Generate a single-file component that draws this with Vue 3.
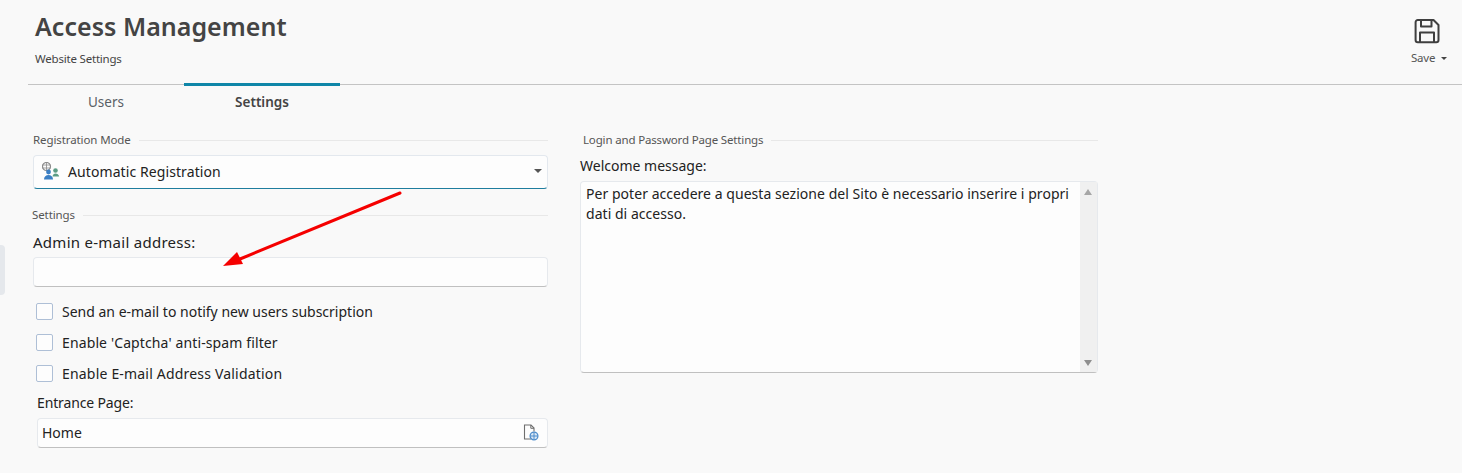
<script setup>
const checks = [
  "Send an e-mail to notify new users subscription",
  "Enable 'Captcha' anti-spam filter",
  "Enable E-mail Address Validation",
];
</script>

<template>
  <div class="page">
    <div class="side-tab"></div>
    <header class="header">
      <div class="heading">
        <h1>Access Management</h1>
        <p>Website Settings</p>
      </div>
      <div class="save">
        <svg class="save-icon" width="26" height="26" viewBox="0 0 26 26" fill="none" stroke="#3f3f3f" stroke-width="2" stroke-linejoin="round">
          <path d="M4 2h15.5L24.5 7v15a2.2 2.2 0 0 1-2.2 2.2H3.8A2.2 2.2 0 0 1 1.6 22V4.2A2.2 2.2 0 0 1 3.8 2z" />
          <path d="M7 2v6.5h10.5V2" />
          <path d="M6 24v-9.5h14V24" />
        </svg>
        <span class="save-label">Save <i class="caret"></i></span>
      </div>
    </header>

    <nav class="tabs">
      <div class="tab">Users</div>
      <div class="tab active">Settings</div>
    </nav>

    <main class="content">
      <section class="col-left">
        <div class="legend"><span>Registration Mode</span></div>
        <div class="select">
          <svg width="18" height="18" viewBox="0 0 18 18">
            <circle cx="4.500" cy="4.500" r="4" fill="none" stroke="#8a8a8a" stroke-width="1.200" />
            <path d="M.5 3h8M.5 6h8M4.500.5v8" stroke="#8a8a8a" stroke-width="0.800" />
            <circle cx="6.500" cy="10" r="2.400" fill="#3b7fc4" />
            <path d="M2 17.500c0-3 2-4.600 4.500-4.600s4.500 1.600 4.500 4.600z" fill="#3b7fc4" />
            <circle cx="13.500" cy="8.500" r="2.300" fill="#5c9c84" />
            <path d="M10.500 14.500c.3-2 1.500-3 3-3s3.400 1 3.700 3z" fill="#5c9c84" />
          </svg>
          <span class="select-text">Automatic Registration</span>
          <i class="select-caret"></i>
        </div>

        <div class="legend legend-settings"><span>Settings</span></div>
        <label class="field-label admin-label">Admin e-mail address:</label>
        <div class="input"></div>

        <div class="checks">
          <div v-for="c in checks" :key="c" class="check-row">
            <span class="box"></span>
            <span>{{ c }}</span>
          </div>
        </div>

        <div class="entrance">
          <label class="field-label">Entrance Page:</label>
          <div class="input input-page">
            <span>Home</span>
            <svg width="16" height="17" viewBox="0 0 16 17" fill="none">
              <path d="M8 15H1.500V1H8l3 3v3.500" stroke="#6e6e6e" stroke-width="1.100" />
              <path d="M7.800 1v3.300H11" stroke="#6e6e6e" stroke-width="1" />
              <circle cx="11" cy="12" r="3.900" fill="#dbe8f5" stroke="#4d8ccb" stroke-width="1.300" />
              <path d="M7.500 12h7M11 8.500v7" stroke="#4d8ccb" stroke-width="1" />
            </svg>
          </div>
        </div>
      </section>

      <section class="col-right">
        <div class="legend legend-login"><span>Login and Password Page Settings</span></div>
        <label class="field-label welcome">Welcome message:</label>
        <div class="textarea">
          <div class="textarea-text">Per poter accedere a questa sezione del Sito è necessario inserire i propri dati di accesso.</div>
          <div class="scrollbar">
            <i class="arrow-up"></i>
            <i class="arrow-down"></i>
          </div>
        </div>
      </section>
    </main>

    <svg class="annotation" width="190" height="80" viewBox="0 0 190 80">
      <path d="M178 3 L18 69" stroke="#f50000" stroke-width="3" stroke-linecap="round" />
      <path d="M1 76 L15 62 L21 74 Z" fill="#f50000" />
    </svg>
  </div>
</template>

<style>
html, body { margin: 0; background: #f9f9f9; }
</style>

<style scoped>
.page {
  position: relative;
  width: 1462px;
  height: 473px;
  overflow: hidden;
  background: #f9f9f9;
  font-family: "Noto Sans", "Open Sans", sans-serif;
  color: #222;
  box-sizing: border-box;
}
.side-tab {
  position: absolute;
  left: 0;
  top: 245px;
  width: 5px;
  height: 50px;
  background: #e5e8ec;
  border-radius: 0 4px 4px 0;
}
.header {
  height: 84px;
  display: flex;
  justify-content: space-between;
  box-sizing: border-box;
  padding: 0 13px 0 35px;
}
h1 {
  margin: 8px 0 0;
  font-size: 25px;
  line-height: 36px;
  font-weight: 600;
  color: #444;
  letter-spacing: 0.03px;
}
.heading p {
  margin: 7px 0 0;
  font-size: 11.5px;
  line-height: 16px;
  color: #444;
  letter-spacing: -0.2px;
}
.save {
  display: flex;
  flex-direction: column;
  align-items: center;
  width: 40px;
  padding-top: 18px;
  box-sizing: border-box;
  font-size: 11.5px;
  color: #555;
}
.save-icon { margin-left: -4px; }
.save-label {
  margin-top: 6px;
  white-space: nowrap;
  line-height: 16px;
  letter-spacing: -0.2px;
}
.caret {
  display: inline-block;
  width: 0;
  height: 0;
  margin-left: 3px;
  vertical-align: 2px;
  border-left: 3px solid transparent;
  border-right: 3px solid transparent;
  border-top: 3px solid #444;
}
.tabs {
  display: flex;
  margin-left: 28px;
  border-top: 1px solid #c4c4c4;
  height: 36px;
}
.tab {
  width: 156px;
  margin-top: -2px;
  border-top: 3px solid transparent;
  box-sizing: border-box;
  text-align: center;
  font-size: 13.5px;
  line-height: 32px;
  color: #5a5f66;
}
.tab.active {
  border-top-color: #0f86a8;
  color: #444;
  font-weight: 600;
}
.content {
  display: flex;
  gap: 32px;
  padding: 11px 0 0 33px;
}
.col-left { width: 515px; }
.col-right { width: 518px; }
.legend {
  display: flex;
  align-items: center;
  gap: 8px;
  height: 16px;
  font-size: 11.5px;
  line-height: 16px;
  color: #555;
  letter-spacing: -0.1px;
}
.legend::after {
  content: "";
  flex: 1;
  height: 1px;
  background: #e8e8e8;
}
.legend-settings { margin: 18px 0 0 -1px; }
.legend-login { padding-left: 3px; letter-spacing: -0.16px; }
.select {
  display: flex;
  align-items: center;
  height: 34px;
  margin-top: 7px;
  padding: 0 5px 2px 8px;
  box-sizing: border-box;
  background: #fdfdfd;
  border: 1px solid #e3e8ee;
  border-bottom: 1px solid #1f7d9e;
  border-radius: 4px;
  font-size: 14px;
}
.select-text {
  margin-left: 8px;
  flex: 1;
  color: #222;
  letter-spacing: 0.09px;
}
.select-caret {
  width: 0;
  height: 0;
  border-left: 4px solid transparent;
  border-right: 4px solid transparent;
  border-top: 4px solid #555;
}
.field-label {
  display: block;
  font-size: 14px;
  line-height: 20px;
  color: #222;
}
.admin-label {
  margin-top: 9px;
  font-size: 15px;
  letter-spacing: 0.27px;
}
.input {
  height: 30px;
  margin-top: 5px;
  box-sizing: border-box;
  background: #fdfdfd;
  border: 1px solid #e6e9ed;
  border-bottom: 1px solid #c0c0c0;
  border-radius: 4px;
}
.checks {
  margin: 9px 0 0 3px;
}
.check-row {
  display: flex;
  align-items: center;
  gap: 9px;
  height: 31px;
  font-size: 14px;
  color: #222;
}
.check-row:nth-child(2) { letter-spacing: 0.12px; }
.check-row:nth-child(3) { letter-spacing: 0.19px; }
.box {
  width: 17px;
  height: 17px;
  box-sizing: border-box;
  background: #fdfdfd;
  border: 1px solid #aebfd6;
  border-radius: 2px;
}
.entrance {
  margin: 3px 0 0 4px;
}
.entrance .field-label {
  line-height: 22px;
  letter-spacing: -0.14px;
}
.input-page {
  display: flex;
  align-items: center;
  justify-content: space-between;
  margin-top: 4px;
  padding: 0 8px 2px 4px;
  font-size: 14px;
}
.welcome { margin-top: 8px; }
.textarea {
  display: flex;
  height: 192px;
  margin-top: 5px;
  box-sizing: border-box;
  background: #fdfdfd;
  border: 1px solid #e6e9ed;
  border-bottom: 1px solid #c0c0c0;
  border-radius: 4px;
}
.textarea-text {
  flex: 1;
  padding: 2px 8px 0 5px;
  font-size: 14px;
  line-height: 20px;
  color: #222;
  letter-spacing: 0.04px;
}
.scrollbar {
  position: relative;
  width: 17px;
  flex: none;
  background: #f0f0f0;
}
.arrow-up, .arrow-down {
  position: absolute;
  left: 4px;
  width: 0;
  height: 0;
  border-left: 4px solid transparent;
  border-right: 4px solid transparent;
}
.arrow-up { top: 7px; border-bottom: 6px solid #a6a6a6; }
.arrow-down { bottom: 6px; border-top: 6px solid #8f8f8f; }
.annotation {
  position: absolute;
  left: 222px;
  top: 190px;
  pointer-events: none;
}
</style>
